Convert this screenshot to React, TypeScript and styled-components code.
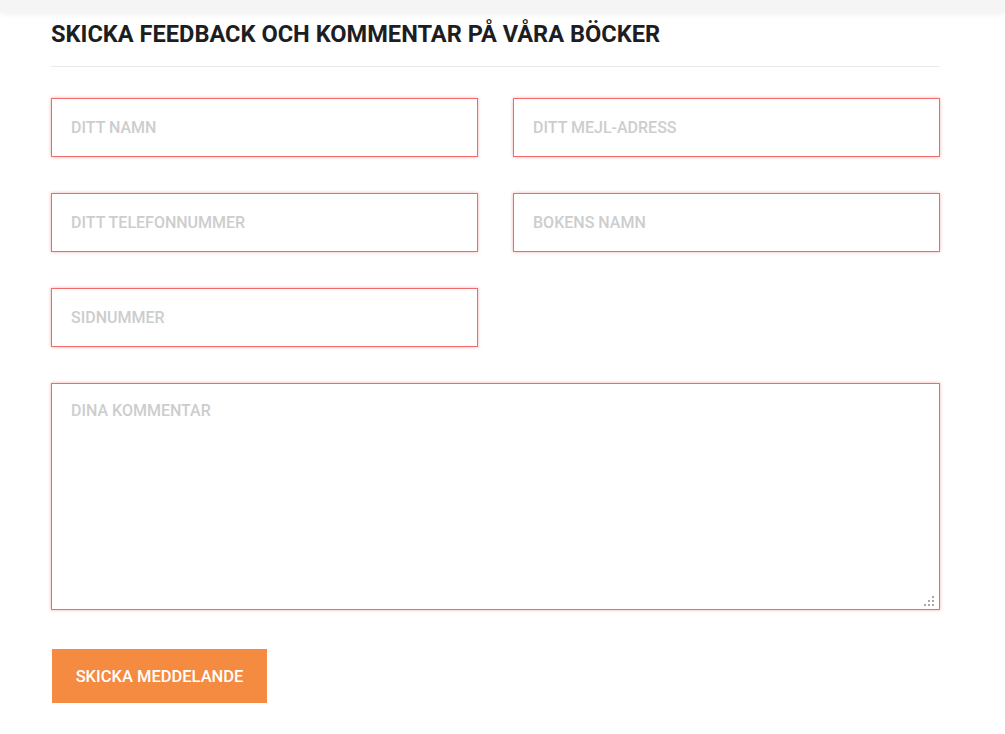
import { createGlobalStyle } from "styled-components";
import styled from "styled-components";

const GlobalStyle = createGlobalStyle`
  html, body {
    margin: 0;
    padding: 0;
    background: #ffffff;
    font-family: Roboto, "Liberation Sans", sans-serif;
  }
`;

const TopBar = styled.div`
  height: 12px;
  background: #f5f5f5;
  box-shadow: 0 2px 6px rgba(0, 0, 0, 0.06);
`;

const Wrapper = styled.main`
  width: 889px;
  margin: 0 0 0 51px;
  padding-top: 8px;
`;

const Title = styled.h2`
  margin: 0;
  font-family: Roboto, "Liberation Sans", sans-serif;
  font-weight: 700;
  font-size: 23.6px;
  line-height: 28px;
  color: #1c1e22;
  padding-bottom: 18px;
  border-bottom: 1px solid #ebebeb;
`;

const Form = styled.form`
  display: grid;
  grid-template-columns: 427px 427px;
  column-gap: 35px;
  row-gap: 36px;
  padding-top: 31px;
`;

const fieldStyle = `
  box-sizing: border-box;
  width: 100%;
  border: 1px solid #f26a6a;
  box-shadow: 0 0 3px rgba(242, 106, 106, 0.55);
  background: #ffffff;
  font-family: Roboto, "Liberation Sans", sans-serif;
  font-weight: 500;
  font-size: 16px;
  color: #333;
  outline: none;
  border-radius: 0;
  &::placeholder {
    color: #cdcdcd;
    text-transform: uppercase;
  }
`;

const Input = styled.input`
  ${fieldStyle}
  height: 59px;
  padding: 0 19px;
`;

const CommentBox = styled.div`
  grid-column: 1 / -1;
  position: relative;
  width: 889px;
  height: 227px;
`;

const TextArea = styled.textarea`
  ${fieldStyle}
  display: block;
  height: 100%;
  padding: 17px 19px;
  resize: none;
`;

const Grip = styled.svg`
  position: absolute;
  right: 6px;
  bottom: 4px;
  pointer-events: none;
`;

const Submit = styled.button`
  grid-column: 1 / 2;
  justify-self: start;
  margin-top: 3px;
  margin-left: 1px;
  width: 215px;
  height: 54px;
  border: 0;
  background: #f58b40;
  color: #ffffff;
  font-family: Roboto, "Liberation Sans", sans-serif;
  font-weight: 500;
  font-size: 16.5px;
  text-transform: uppercase;
  cursor: pointer;
`;

export default function App() {
  return (
    <>
      <GlobalStyle />
      <TopBar />
      <Wrapper>
        <Title>SKICKA FEEDBACK OCH KOMMENTAR PÅ VÅRA BÖCKER</Title>
        <Form onSubmit={(e) => e.preventDefault()}>
          <Input placeholder="DITT NAMN" autoFocus />
          <Input placeholder="DITT MEJL-ADRESS" />
          <Input placeholder="DITT TELEFONNUMMER" />
          <Input placeholder="BOKENS NAMN" />
          <Input placeholder="SIDNUMMER" />
          <div />
          <CommentBox>
            <TextArea placeholder="DINA KOMMENTAR" />
            <Grip width="10" height="10" viewBox="0 0 10 10" fill="#a9a9a9">
              <rect x="8" y="0" width="2" height="2" />
              <rect x="4" y="4" width="2" height="2" />
              <rect x="8" y="4" width="2" height="2" />
              <rect x="0" y="8" width="2" height="2" />
              <rect x="4" y="8" width="2" height="2" />
              <rect x="8" y="8" width="2" height="2" />
            </Grip>
          </CommentBox>
          <Submit type="submit">SKICKA MEDDELANDE</Submit>
        </Form>
      </Wrapper>
    </>
  );
}
